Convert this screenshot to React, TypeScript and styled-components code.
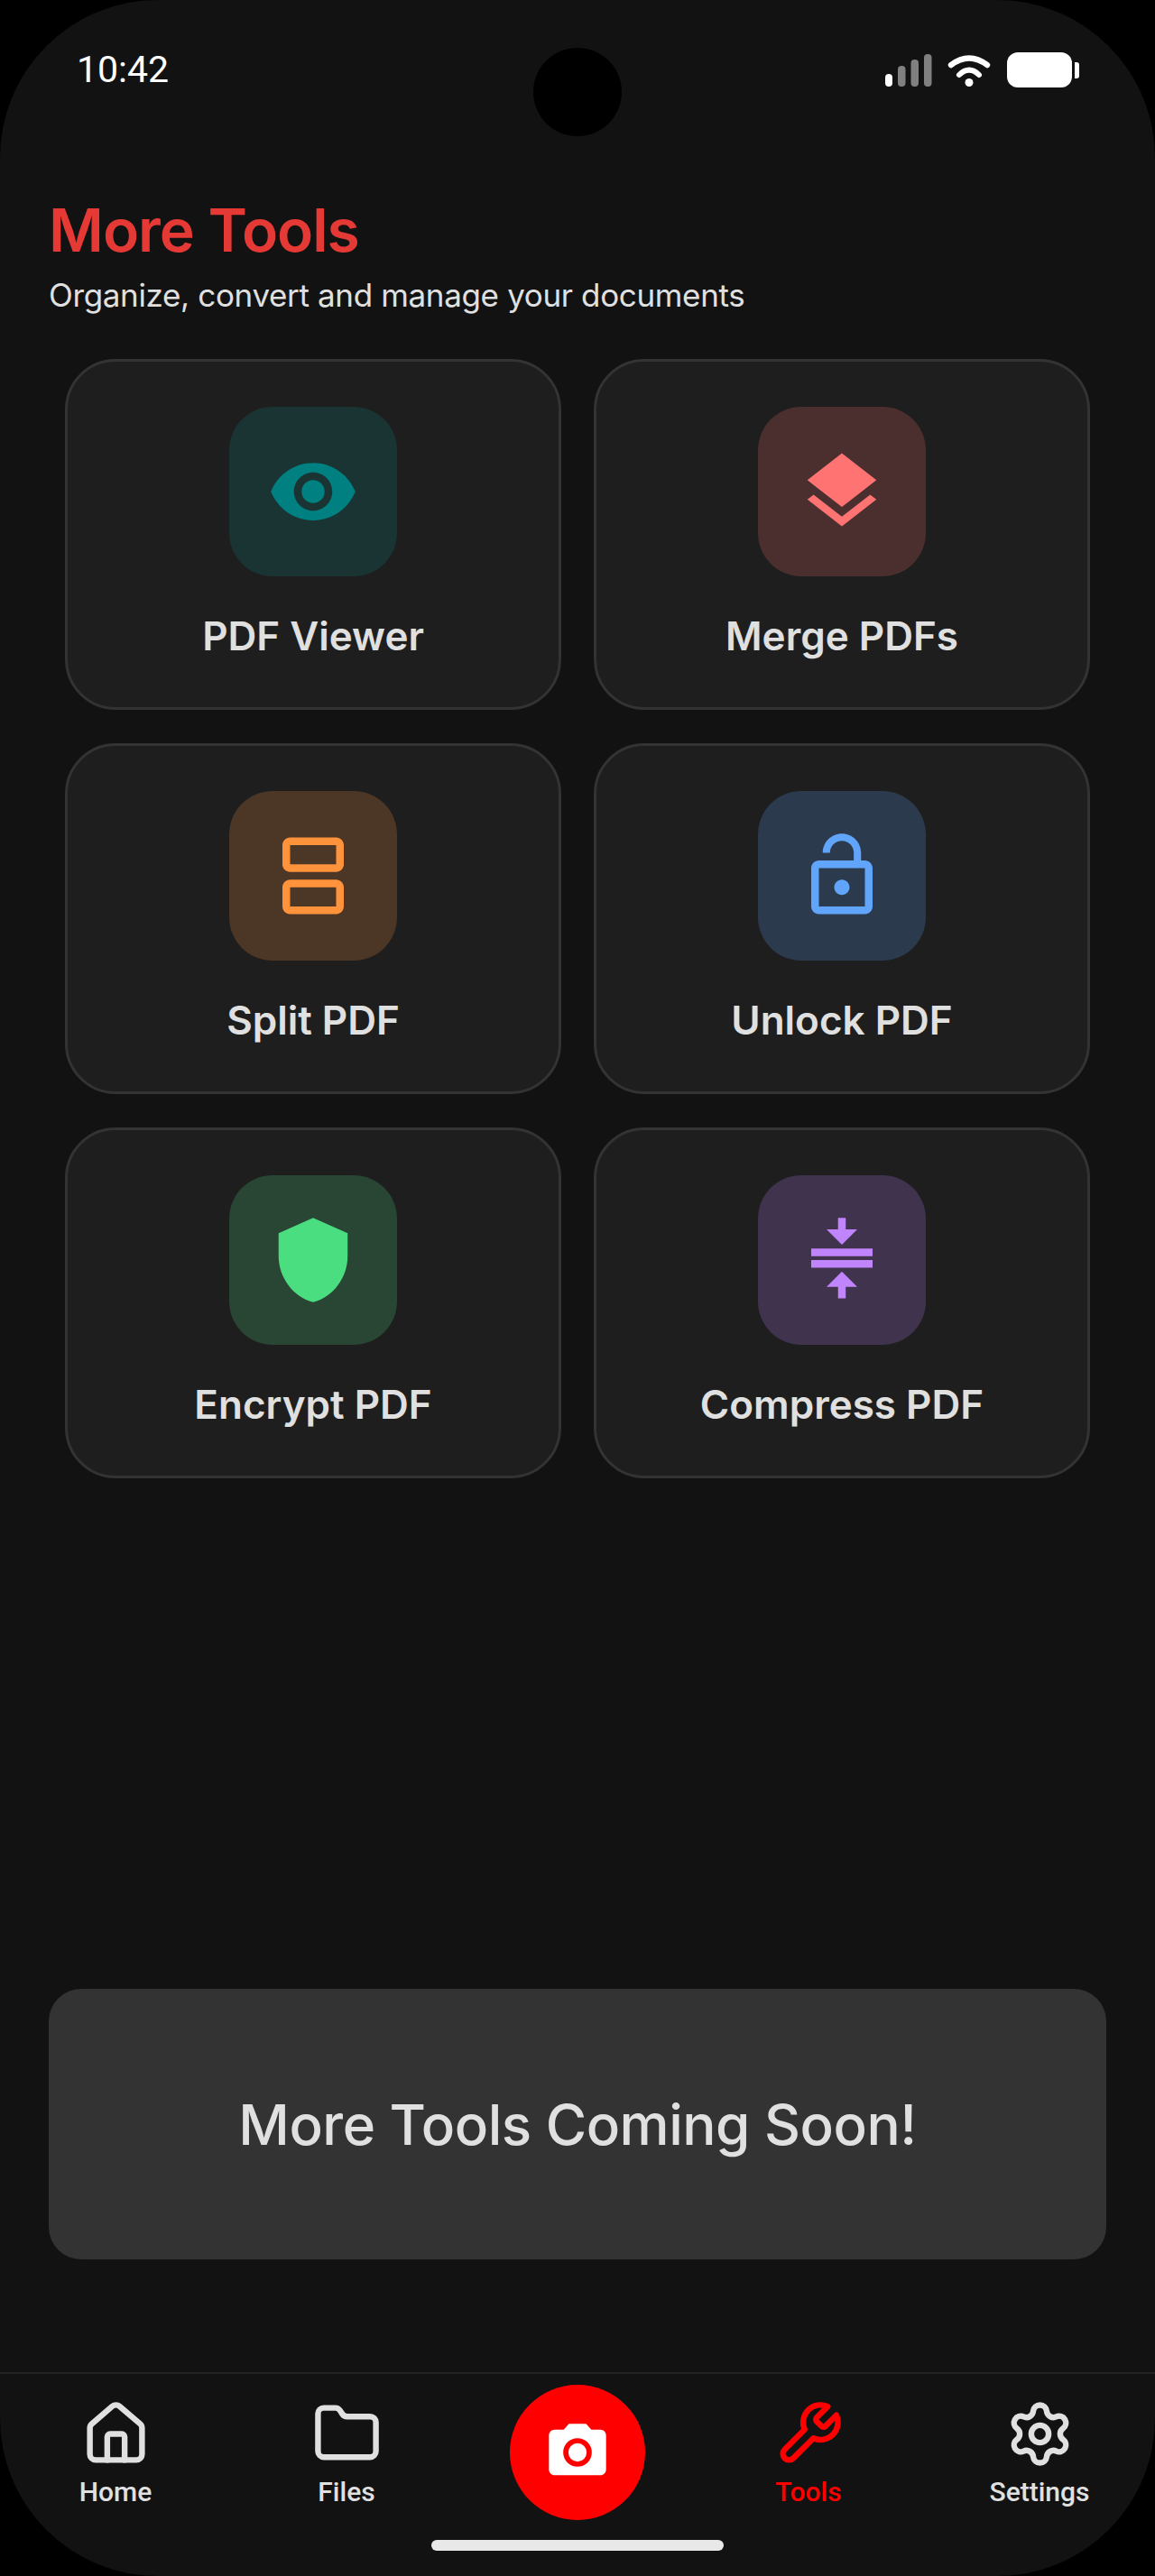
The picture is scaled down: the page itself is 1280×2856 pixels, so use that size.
import React from 'react'
import styled, { createGlobalStyle } from 'styled-components'
import { House, Folder, Settings } from 'lucide-react'

const GlobalStyle = createGlobalStyle`
  html, body {
    margin: 0;
    padding: 0;
    background: #000;
  }
  * {
    box-sizing: border-box;
  }
`

const tools = [
  {
    name: 'PDF Viewer',
    bg: '#1a3333',
    color: '#008080',
    d: 'M12 4.5C7 4.5 2.73 7.61 1 12c1.73 4.39 6 7.5 11 7.5s9.27-3.11 11-7.5c-1.73-4.39-6-7.5-11-7.5zM12 17c-2.76 0-5-2.24-5-5s2.24-5 5-5 5 2.24 5 5-2.24 5-5 5zm0-8c-1.66 0-3 1.34-3 3s1.34 3 3 3 3-1.34 3-3-1.34-3-3-3z',
  },
  {
    name: 'Merge PDFs',
    bg: '#4b2f2f',
    color: '#ff7373',
    d: 'M11.99 18.54l-7.37-5.73L3 14.07l9 7 9-7-1.63-1.27-7.38 5.74zM12 16l7.36-5.73L21 9l-9-7-9 7 1.63 1.27L12 16z',
  },
  {
    name: 'Split PDF',
    bg: '#4c3626',
    color: '#ff933b',
    d: 'M18 2H6c-1.1 0-2 .9-2 2v5c0 1.1.9 2 2 2h12c1.1 0 2-.9 2-2V4c0-1.1-.9-2-2-2zm0 7H6V4h12v5zm0 4H6c-1.1 0-2 .9-2 2v5c0 1.1.9 2 2 2h12c1.1 0 2-.9 2-2v-5c0-1.1-.9-2-2-2zm0 7H6v-5h12v5z',
  },
  {
    name: 'Unlock PDF',
    bg: '#2c3a4d',
    color: '#60a5fa',
    d: 'M12 17c1.1 0 2-.9 2-2s-.9-2-2-2-2 .9-2 2 .9 2 2 2zm6-9h-1V6c0-2.76-2.24-5-5-5S7 3.24 7 6h1.9c0-1.71 1.39-3.1 3.1-3.1 1.71 0 3.1 1.39 3.1 3.1v2H6c-1.1 0-2 .9-2 2v10c0 1.1.9 2 2 2h12c1.1 0 2-.9 2-2V10c0-1.1-.9-2-2-2zm0 12H6V10h12v10z',
  },
  {
    name: 'Encrypt PDF',
    bg: '#294533',
    color: '#4ade80',
    d: 'M12 1L3 5v6c0 5.55 3.84 10.74 9 12 5.16-1.26 9-6.45 9-12V5l-9-4z',
  },
  {
    name: 'Compress PDF',
    bg: '#40334d',
    color: '#c084fc',
    d: 'M8 19h3v3h2v-3h3l-4-4-4 4zm8-15h-3V1h-2v3H8l4 4 4-4zM4 9v2h16V9H4zm0 3v2h16v-2H4z',
  },
]

// the reference has the older wrench outline, lucide's current one is different
const OldWrench: React.FC<{ size: number; strokeWidth: number }> = ({ size, strokeWidth }) => (
  <svg
    width={size}
    height={size}
    viewBox="0 0 24 24"
    fill="none"
    stroke="currentColor"
    strokeWidth={strokeWidth}
    strokeLinecap="round"
    strokeLinejoin="round"
  >
    <path d="M14.7 6.3a1 1 0 0 0 0 1.4l1.6 1.6a1 1 0 0 0 1.4 0l3.77-3.77a6 6 0 0 1-7.94 7.94l-6.91 6.91a2.12 2.12 0 0 1-3-3l6.91-6.91a6 6 0 0 1 7.94-7.94l-3.76 3.76z" />
  </svg>
)

const navItems = [
  { label: 'Home', Icon: House },
  { label: 'Files', Icon: Folder },
  { label: 'Tools', Icon: OldWrench, active: true },
  { label: 'Settings', Icon: Settings },
]

const App: React.FC = () => {
  const left = navItems.slice(0, 2)
  const right = navItems.slice(2)

  const renderNavItem = (item: (typeof navItems)[number]) => (
    <NavItem key={item.label} $active={!!item.active}>
      <NavIcon>
        <item.Icon size={77} strokeWidth={2} />
      </NavIcon>
      <NavLabel>{item.label}</NavLabel>
    </NavItem>
  )

  return (
    <Phone>
      <GlobalStyle />
      <Punch />
      <StatusBar>
        <Clock>10:42</Clock>
        <StatusIcons>
          <svg width="52" height="36" viewBox="0 0 52 36">
            <rect x="0" y="22" width="8" height="14" rx="4" fill="#fff" />
            <rect x="14" y="13" width="8.5" height="23" rx="4" fill="#808080" />
            <rect x="28.5" y="6" width="8.5" height="30" rx="4" fill="#808080" />
            <rect x="43" y="0" width="8.5" height="36" rx="4" fill="#808080" />
          </svg>
          <svg width="48" height="36" viewBox="0 0 48 36">
            <path d="M4 12 Q24 -3 44 12" fill="none" stroke="#fff" strokeWidth="6.5" strokeLinecap="round" />
            <path d="M13 23 Q24 12 35 23" fill="none" stroke="#fff" strokeWidth="6" strokeLinecap="round" />
            <circle cx="24" cy="31.5" r="4.5" fill="#fff" />
          </svg>
          <Battery>
            <BatteryBody />
            <BatteryCap />
          </Battery>
        </StatusIcons>
      </StatusBar>

      <Header>
        <Title>More Tools</Title>
        <Subtitle>Organize, convert and manage your documents</Subtitle>
      </Header>

      <Grid>
        {tools.map((tool) => (
          <Card key={tool.name}>
            <IconTile $bg={tool.bg}>
              <svg width="102" height="102" viewBox="0 0 24 24" fill={tool.color}>
                <path d={tool.d} />
              </svg>
            </IconTile>
            <CardLabel>{tool.name}</CardLabel>
          </Card>
        ))}
      </Grid>

      <Banner>More Tools Coming Soon!</Banner>

      <BottomNav>
        <NavRow>
          {left.map(renderNavItem)}
          <FabSlot>
            <Fab>
              <svg width="76" height="76" viewBox="0 0 24 24">
                <path
                  d="M9 2L7.17 4H4c-1.1 0-2 .9-2 2v12c0 1.1.9 2 2 2h16c1.1 0 2-.9 2-2V6c0-1.1-.9-2-2-2h-3.17L15 2H9z"
                  fill="#fff"
                />
                <circle cx="12" cy="12" r="4.1" fill="#fff" stroke="#f00" strokeWidth="1.8" />
              </svg>
            </Fab>
          </FabSlot>
          {right.map(renderNavItem)}
        </NavRow>
        <HomeIndicator />
      </BottomNav>
    </Phone>
  )
}

const Phone = styled.div`
  position: relative;
  width: 1280px;
  height: 2856px;
  background-color: #121212;
  border-radius: 175px;
  overflow: hidden;
  display: flex;
  flex-direction: column;
  font-family: Inter, 'Noto Sans', sans-serif;
`

const Punch = styled.div`
  position: absolute;
  top: 53px;
  left: 591px;
  width: 98px;
  height: 98px;
  border-radius: 50%;
  background-color: #000;
`

const StatusBar = styled.div`
  display: flex;
  justify-content: space-between;
  align-items: flex-start;
  padding: 53px 84px 0 85px;
  height: 215px;
`

const Clock = styled.span`
  font-family: Roboto, sans-serif;
  font-size: 41px;
  line-height: 48px;
  color: #fff;
`

const StatusIcons = styled.div`
  display: flex;
  align-items: flex-start;
  gap: 17px;
  padding-top: 7px;
`

const Battery = styled.div`
  display: flex;
  align-items: center;
  gap: 3px;
  margin-top: -2px;
  margin-left: 1px;
`

const BatteryBody = styled.div`
  width: 72px;
  height: 39px;
  border-radius: 12px;
  background-color: #fff;
`

const BatteryCap = styled.div`
  width: 5px;
  height: 18px;
  border-radius: 0 3px 3px 0;
  background-color: #fff;
`

const Header = styled.header`
  padding: 0 54px;
`

const Title = styled.h1`
  margin: 0;
  font-size: 66px;
  line-height: 80px;
  font-weight: 600;
  letter-spacing: -1px;
  color: #e53935;
`

const Subtitle = styled.p`
  margin: 8px 0 0;
  font-size: 35px;
  line-height: 48px;
  font-weight: 400;
  letter-spacing: -0.35px;
  color: #e0e0e0;
`

const Grid = styled.div`
  display: grid;
  grid-template-columns: 550px 550px;
  grid-auto-rows: 389px;
  gap: 37px 36px;
  padding: 0 72px;
  margin-top: 47px;
`

const Card = styled.div`
  display: flex;
  flex-direction: column;
  align-items: center;
  padding-top: 50px;
  background-color: #1e1e1e;
  border: 3px solid #333;
  border-radius: 56px;
`

const IconTile = styled.div<{ $bg: string }>`
  display: flex;
  align-items: center;
  justify-content: center;
  width: 186px;
  height: 188px;
  border-radius: 48px;
  background-color: ${(p) => p.$bg};
`

const CardLabel = styled.div`
  margin-top: 39px;
  font-size: 44px;
  line-height: 54px;
  font-weight: 600;
  color: #e0e0e0;
`

const Banner = styled.div`
  display: flex;
  align-items: center;
  justify-content: center;
  height: 300px;
  margin: auto 54px 125px;
  border-radius: 36px;
  background-color: #333;
  font-size: 62px;
  font-weight: 500;
  letter-spacing: -0.5px;
  color: #e0e0e0;
`

const BottomNav = styled.nav`
  height: 226px;
  border-top: 2px solid #222;
`

const NavRow = styled.div`
  display: flex;
  height: 184px;
`

const NavItem = styled.div<{ $active: boolean }>`
  flex: 1;
  display: flex;
  flex-direction: column;
  align-items: center;
  padding-top: 28px;
  color: ${(p) => (p.$active ? '#f00' : '#e0e0e0')};
`

const NavIcon = styled.div`
  display: flex;
  height: 77px;
`

const NavLabel = styled.span`
  margin-top: 8px;
  font-family: Roboto, sans-serif;
  font-size: 30px;
  line-height: 36px;
  font-weight: 500;
`

const FabSlot = styled.div`
  flex: 1;
  display: flex;
  justify-content: center;
  padding-top: 12px;
`

const Fab = styled.div`
  display: flex;
  align-items: center;
  justify-content: center;
  width: 150px;
  height: 150px;
  border-radius: 50%;
  background-color: #f00;
`

const HomeIndicator = styled.div`
  width: 324px;
  height: 12px;
  margin: 0 auto;
  border-radius: 6px;
  background-color: #e8e8e8;
`

export default App
